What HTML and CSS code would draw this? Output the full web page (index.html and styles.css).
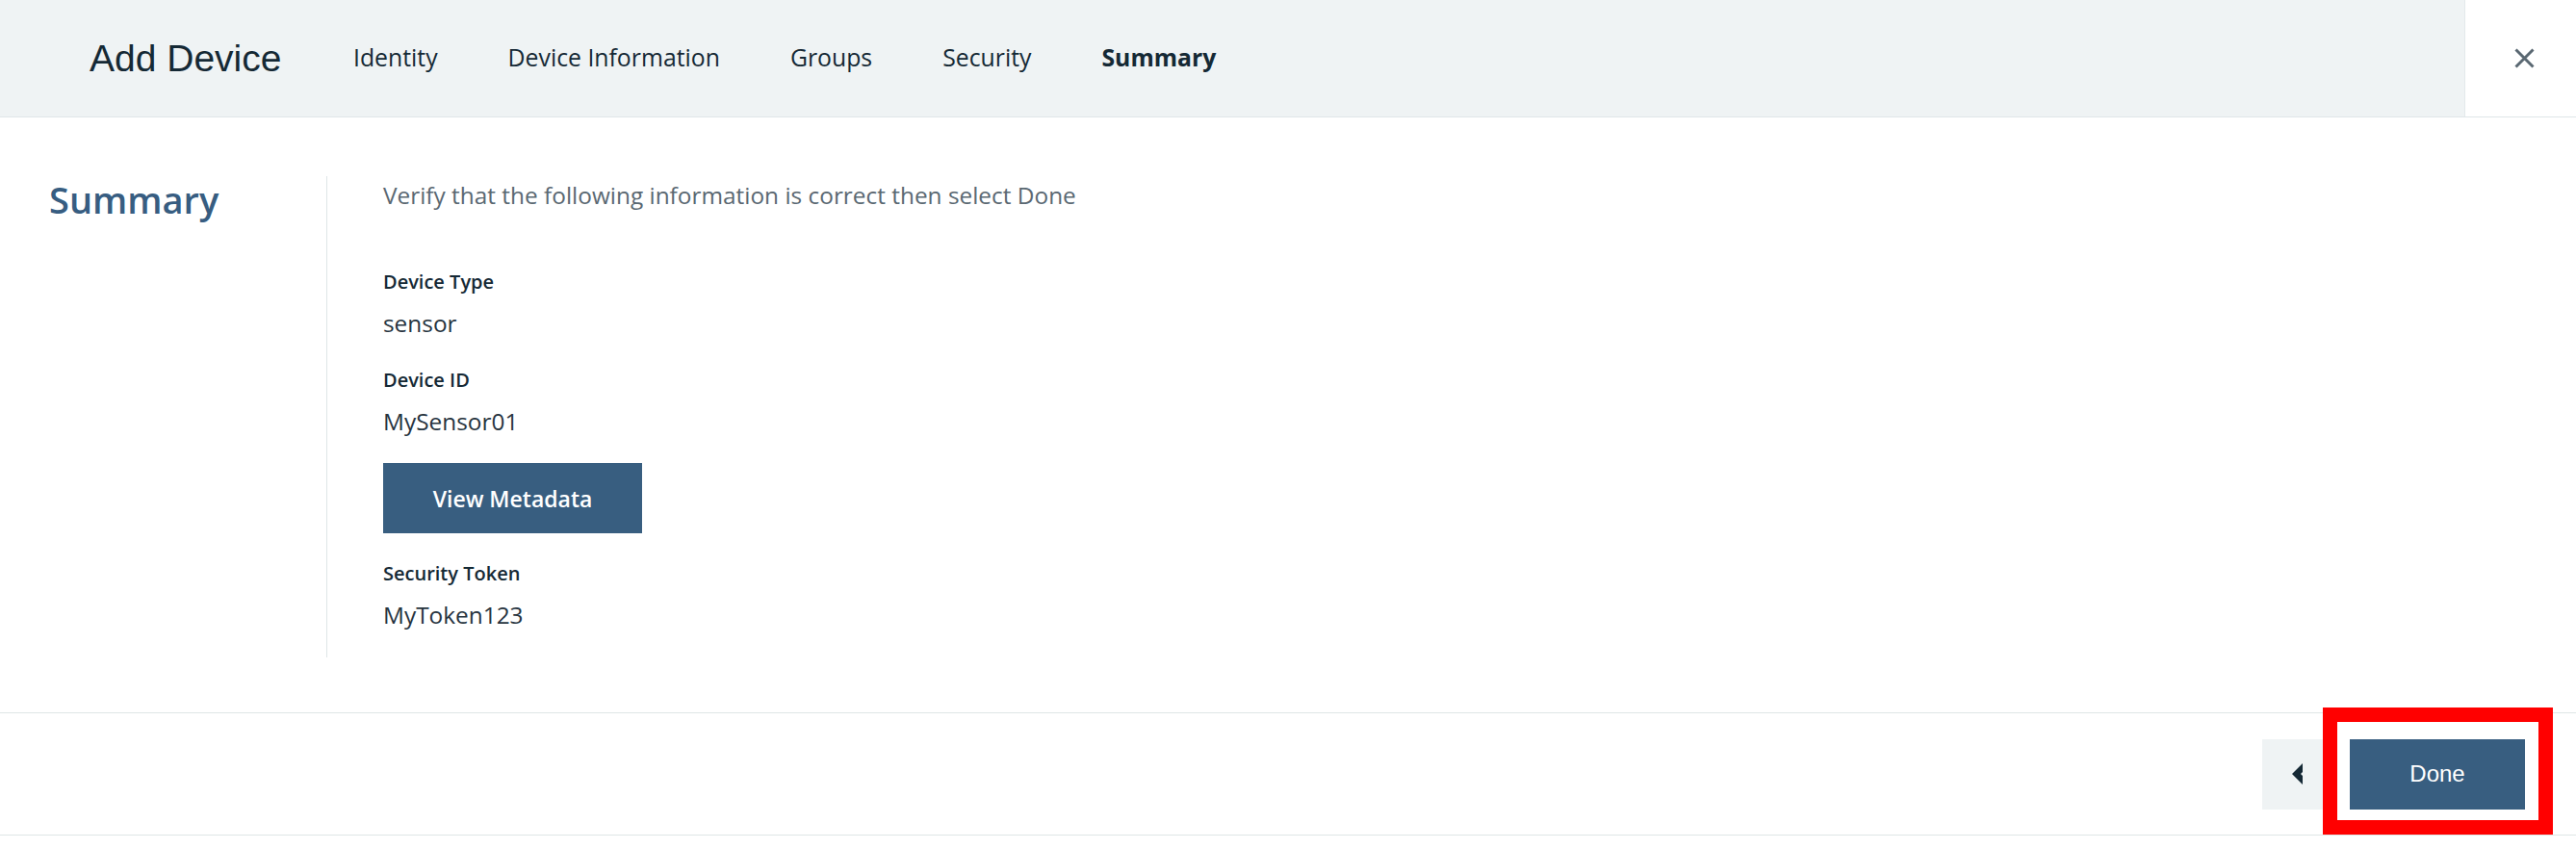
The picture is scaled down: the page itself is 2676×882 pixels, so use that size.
FILE: index.html
```html
<!DOCTYPE html>
<html lang="en">
<head>
<meta charset="utf-8">
<title>Add Device</title>
<link rel="stylesheet" href="styles.css">
</head>
<body>
<header class="topbar">
  <div class="topbar-title">Add Device</div>
  <nav class="steps">
    <span class="step">Identity</span>
    <span class="step">Device Information</span>
    <span class="step">Groups</span>
    <span class="step">Security</span>
    <span class="step step-active">Summary</span>
  </nav>
  <button class="close" aria-label="Close">
    <svg width="21" height="21" viewBox="0 0 21 21"><path d="M1.5 1.5 L19.5 19.5 M19.5 1.5 L1.5 19.5" stroke="#5a6872" stroke-width="3" fill="none"/></svg>
  </button>
</header>

<main class="content">
  <aside class="side">
    <h1 class="side-title">Summary</h1>
  </aside>
  <section class="details">
    <p class="intro">Verify that the following information is correct then select Done</p>
    <div class="field">
      <div class="label">Device Type</div>
      <div class="value">sensor</div>
    </div>
    <div class="field">
      <div class="label">Device ID</div>
      <div class="value">MySensor01</div>
    </div>
    <button class="btn-meta">View Metadata</button>
    <div class="field">
      <div class="label">Security Token</div>
      <div class="value">MyToken123</div>
    </div>
  </section>
</main>

<footer class="footer">
  <button class="btn-back" aria-label="Back">
    <svg width="11" height="22" viewBox="0 0 11 22"><path d="M11 0 L0 11 L11 22 L11 13 L9 11 L11 9 Z" fill="#152935"/></svg>
  </button>
  <button class="btn-done">Done</button>
</footer>

<div class="highlight"></div>
</body>
</html>
```
FILE: styles.css
```css
* { box-sizing: border-box; }
html, body { margin: 0; padding: 0; background: #ffffff; }
body {
  font-family: "Open Sans", "Noto Sans", sans-serif;
  color: #152935;
  position: relative;
  width: 2676px;
  height: 882px;
  overflow: hidden;
}
button { font: inherit; border: 0; margin: 0; padding: 0; cursor: pointer; }

.topbar {
  display: flex;
  align-items: center;
  height: 122px;
  background: #eff3f4;
  border-bottom: 1px solid #dfe6e8;
  padding-left: 93px;
}
.topbar-title {
  flex: 0 0 274px;
  font-family: "Liberation Sans", Arial, sans-serif;
  font-size: 39px;
  line-height: 48px;
  color: #152935;
  padding-top: 1px;
}
.steps {
  display: flex;
  gap: 73px;
  flex: 1;
  font-size: 24.8px;
  line-height: 32px;
  color: #152935;
  padding-bottom: 3px;
}
.step-active { font-weight: 700; }
.close {
  align-self: stretch;
  width: 116px;
  background: #ffffff;
  border-left: 1px solid #e3e9eb;
  display: flex;
  align-items: center;
  padding-left: 51px;
}
.close svg { display: block; }

.content {
  display: flex;
  margin-top: 61px;
}
.side {
  flex: 0 0 339px;
  padding-left: 51px;
}
.side-title {
  margin: 0;
  font-size: 38px;
  line-height: 48px;
  font-weight: 600;
  color: #375d81;
}
.details {
  border-left: 1px solid #dfe6e8;
  padding: 4px 0 28px 58px;
}
.intro {
  margin: 0 0 60px;
  font-size: 24.4px;
  line-height: 32px;
  color: #5a6872;
}
.field + .field { margin-top: 29px; }
.label {
  font-size: 20px;
  line-height: 28px;
  font-weight: 600;
  color: #152935;
  margin-bottom: 12px;
}
.value {
  font-size: 24.4px;
  line-height: 33px;
  color: #27343f;
}
.btn-meta {
  display: block;
  width: 269px;
  height: 73px;
  margin: 27px 0 28px;
  background: #385e80;
  color: #ffffff;
  font-size: 23px;
  font-weight: 600;
  text-align: center;
}

.footer {
  margin-top: 57px;
  height: 128px;
  border-top: 1px solid #dfe6e6;
  border-bottom: 1px solid #dfe6e6;
  display: flex;
  justify-content: flex-end;
  align-items: center;
  gap: 18px;
  padding-right: 53px;
}
.btn-back {
  width: 73px;
  height: 73px;
  background: #eff3f4;
  display: flex;
  align-items: center;
  justify-content: center;
}
.btn-back svg { display: block; }
.btn-done {
  width: 182px;
  height: 73px;
  background: #385e80;
  color: #ffffff;
  font-family: "Liberation Sans", Arial, sans-serif;
  font-size: 24px;
}

.highlight {
  position: absolute;
  left: 2413px;
  top: 735px;
  width: 239px;
  height: 132px;
  border: 15px solid #ff0000;
}
```
